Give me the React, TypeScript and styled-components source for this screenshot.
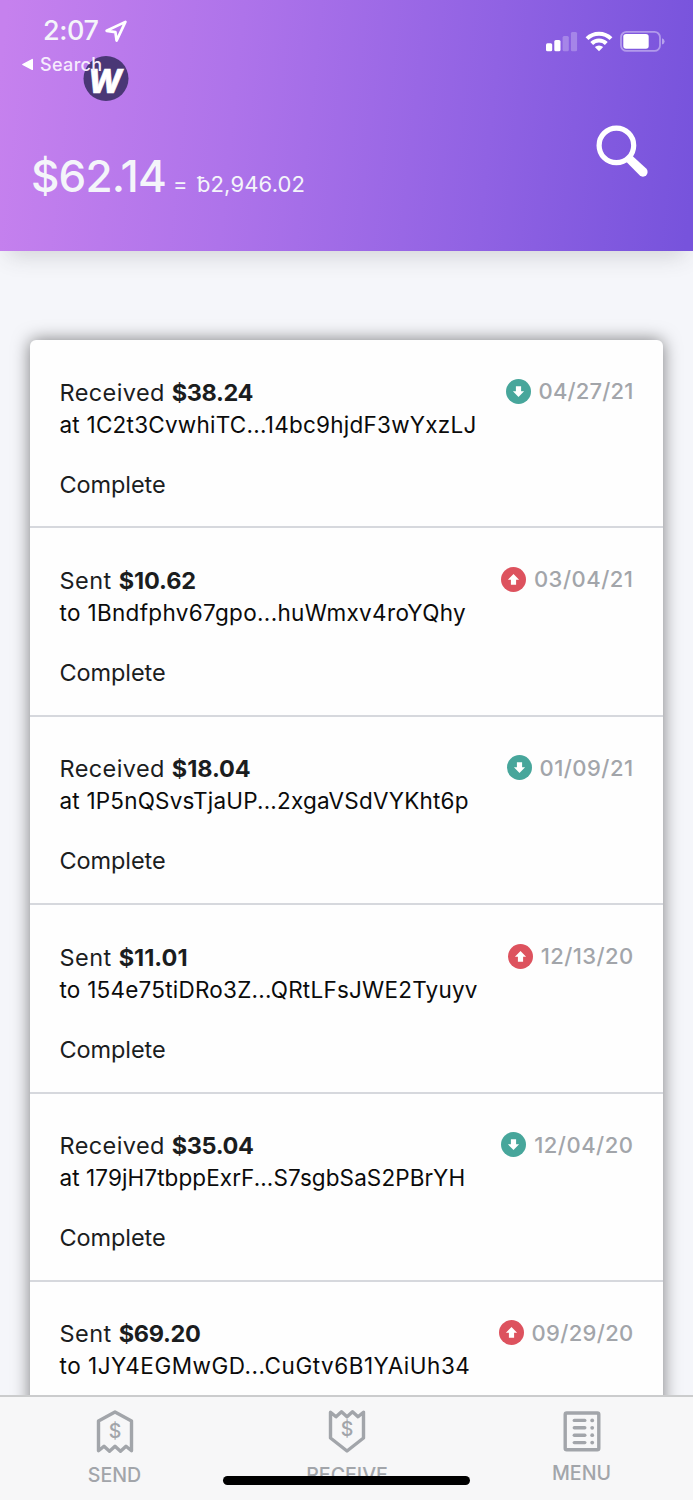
import React from 'react';
import styled, { createGlobalStyle } from 'styled-components';

const GlobalStyle = createGlobalStyle`
  * { box-sizing: border-box; }
  body { margin: 0; background: #f5f6fa; font-family: Inter, "Liberation Sans", sans-serif; }
`;

const Screen = styled.div`
  display: flex;
  flex-direction: column;
  width: 693px;
  height: 1500px;
  overflow: hidden;
  background: #f5f6fa;
`;

const Header = styled.header`
  position: relative;
  z-index: 1;
  flex: none;
  display: flex;
  flex-direction: column;
  height: 251px;
  background: linear-gradient(96deg, #c681ee 1%, #ae73ea 34%, #9062e3 70%, #7753dc 99%);
  box-shadow: 0 12px 22px -8px rgba(60, 62, 66, 0.2);
  color: #f4f5fa;
`;

const StatusBar = styled.div`
  display: flex;
  justify-content: space-between;
  align-items: flex-start;
  height: 50px;
  padding: 14px 27px 0 43px;
`;

const Clock = styled.div`
  display: flex;
  align-items: center;
  gap: 6px;
  height: 34px;
  font-size: 27px;
  font-weight: 550;
  line-height: 34px;
  letter-spacing: -0.4px;
`;

const StatusIcons = styled.div`
  display: flex;
  gap: 7px;
  padding-top: 16px;
`;

const BackLink = styled.div`
  position: relative;
  z-index: 1;
  display: flex;
  align-items: center;
  gap: 6px;
  height: 28px;
  padding-left: 21px;
  font-size: 18px;
  font-weight: 500;
  letter-spacing: 0.35px;
  color: #f6ecfd;
`;

const Logo = styled.svg`
  position: absolute;
  left: 83px;
  top: 55px;
`;

const BalanceRow = styled.div`
  display: flex;
  justify-content: space-between;
  align-items: flex-start;
  padding: 46px 44px 0 31px;
`;

const Balance = styled.div`
  display: flex;
  align-items: baseline;
  padding-top: 25px;
  line-height: 54px;
  white-space: pre;
`;

const Fiat = styled.span`
  font-size: 44px;
  font-weight: 450;
  letter-spacing: -0.8px;
`;

const Bits = styled.span`
  margin-left: 7px;
  padding-bottom: 1px;
  font-size: 22px;
  letter-spacing: 0.15px;
  word-spacing: 2.8px;
`;

const List = styled.main`
  flex: 1;
  min-height: 0;
  overflow: hidden;
  padding: 89px 30px 0;
`;

const Card = styled.section`
  height: 1200px;
  border-radius: 6px;
  background: #fefefe;
  box-shadow: 0 0 17px rgba(0, 0, 0, 0.5);
`;

const Row = styled.article`
  display: flex;
  justify-content: space-between;
  align-items: flex-start;
  height: 188.4px;
  padding: 36.5px 29.5px 0 29.5px;
  border-bottom: 2px solid #d6d8dd;
  line-height: 32px;
  color: #1b1d1e;
`;

const Details = styled.div`
  display: flex;
  flex-direction: column;
`;

const Title = styled.div<{ $spacing: number }>`
  font-size: 23.5px;
  letter-spacing: ${p => p.$spacing}px;
  white-space: pre;
`;

const Amount = styled.strong<{ $spacing: number }>`
  font-weight: 700;
  letter-spacing: ${p => p.$spacing}px;
`;

const Address = styled.div<{ $spacing: number }>`
  font-size: 22.5px;
  letter-spacing: ${p => p.$spacing}px;
  color: #0b0b0b;
  white-space: nowrap;
`;

const State = styled.div`
  margin-top: 28px;
  font-size: 23.5px;
  letter-spacing: -0.1px;
`;

const When = styled.time<{ $spacing: number }>`
  display: flex;
  align-items: center;
  gap: 8px;
  height: 29px;
  font-size: 22px;
  font-weight: 500;
  letter-spacing: ${p => p.$spacing}px;
  color: #a2a5aa;
`;

const TabBar = styled.nav`
  position: relative;
  flex: none;
  display: grid;
  grid-template-columns: 229px 236px 233px;
  height: 105px;
  border-top: 2px solid #cbcccd;
  background: #f7f7f8;
`;

const Tab = styled.div<{ $lift?: boolean }>`
  display: flex;
  flex-direction: column;
  align-items: center;
  gap: ${p => (p.$lift ? 8 : 10)}px;
  padding-top: 12px;
  font-size: 19.6px;
  font-weight: 500;
  line-height: 24px;
  color: #a2a5aa;
`;

const HomeIndicator = styled.div`
  position: absolute;
  left: 223px;
  top: 79px;
  width: 247px;
  height: 9px;
  border-radius: 5px;
  background: #000;
`;

const Direction = ({ received }: { received: boolean }) => (
  <svg width="25" height="25" viewBox="-12.5 -12.5 25 25">
    <circle r="12.5" fill={received ? '#47a69b' : '#dd525e'} />
    <path
      d="M-2.6-5.3H2.6V-.2H5.6L0 5.6-5.6-.2H-2.6Z"
      fill="#fff"
      transform={received ? undefined : 'rotate(180)'}
    />
  </svg>
);

const iconStroke = {
  fill: 'none',
  stroke: '#a2a5aa',
  strokeWidth: 3.4,
  strokeLinejoin: 'round' as const,
  strokeLinecap: 'round' as const,
};

const SendIcon = () => (
  <svg width="38" height="44" viewBox="0 0 38 44">
    <path d="M19 3 35.5 12V41.7L30 37.2 24.5 42.2 19 37.2 13.5 42.2 8 37.2 2.5 41.7V12Z" {...iconStroke} />
    <text x="19" y="29.3" textAnchor="middle" fontSize="19.5" fontWeight="550" fill="#a2a5aa">$</text>
  </svg>
);

const ReceiveIcon = () => (
  <svg width="38" height="44" viewBox="0 0 38 44">
    <path d="M2.5 3.2 8 7.7 13.5 2.7 19 7.7 24.5 2.7 30 7.7 35.5 3.2V29L19 42 2.5 29Z" {...iconStroke} />
    <text x="19" y="27" textAnchor="middle" fontSize="19.5" fontWeight="550" fill="#a2a5aa">$</text>
  </svg>
);

const MenuIcon = () => (
  <svg width="38" height="44" viewBox="0 0 38 44">
    <rect x="2.2" y="4" width="33.6" height="36.8" rx="1.5" {...iconStroke} />
    {[11.4, 18.8, 26.2, 33.6].map(y => (
      <g key={y}>
        <path d={`M11.3 ${y}H21.8`} {...iconStroke} />
        <circle cx="29.2" cy={y} r="1.9" fill="#a2a5aa" />
      </g>
    ))}
  </svg>
);

type Tx = {
  received: boolean;
  amount: string;
  amountSpacing: number;
  address: string;
  addressSpacing: number;
  date: string;
  dateSpacing: number;
};

const transactions: Tx[] = [
  { received: true, amount: '$38.24', amountSpacing: -0.4, address: 'at 1C2t3CvwhiTC...14bc9hjdF3wYxzLJ', addressSpacing: 0.24, date: '04/27/21', dateSpacing: 0.15 },
  { received: false, amount: '$10.62', amountSpacing: -0.1, address: 'to 1Bndfphv67gpo...huWmxv4roYQhy', addressSpacing: 0.33, date: '03/04/21', dateSpacing: 0.5 },
  { received: true, amount: '$18.04', amountSpacing: -0.1, address: 'at 1P5nQSvsTjaUP...2xgaVSdVYKht6p', addressSpacing: 0.2, date: '01/09/21', dateSpacing: 0.45 },
  { received: false, amount: '$11.01', amountSpacing: 0, address: 'to 154e75tiDRo3Z...QRtLFsJWE2Tyuyv', addressSpacing: 0.23, date: '12/13/20', dateSpacing: 0.4 },
  { received: true, amount: '$35.04', amountSpacing: -0.4, address: 'at 179jH7tbppExrF...S7sgbSaS2PBrYH', addressSpacing: 0.09, date: '12/04/20', dateSpacing: 0.5 },
  { received: false, amount: '$69.20', amountSpacing: -0.3, address: 'to 1JY4EGMwGD...CuGtv6B1YAiUh34', addressSpacing: 0.52, date: '09/29/20', dateSpacing: 0.3 },
];

export default function App() {
  return (
    <Screen>
      <GlobalStyle />
      <Header>
        <StatusBar>
          <Clock>
            2:07
            <svg width="22" height="23" viewBox="0 0 22 23">
              <path d="M20.4 1.9 11.6 20.6 10.4 12.2 1.6 10.8Z" fill="none" stroke="#fff" strokeWidth="2.7" strokeLinejoin="round" />
            </svg>
          </Clock>
          <StatusIcons>
            <svg width="33" height="22" viewBox="0 0 33 22" fill="#fff">
              <rect x="1" y="13.3" width="6.2" height="8" rx="1.5" />
              <rect x="9.3" y="10" width="6.2" height="11.3" rx="1.5" />
              <rect x="17.6" y="6" width="6.2" height="15.3" rx="1.5" opacity=".25" />
              <rect x="25.9" y="2" width="6.2" height="19.3" rx="1.5" opacity=".25" />
            </svg>
            <svg width="28" height="22" viewBox="0 0 28 22">
              <g fill="none" stroke="#fff" strokeWidth="4">
                <path d="M2 8.7A17 17 0 0 1 26 8.7" />
                <path d="M6.7 13.5A10.3 10.3 0 0 1 21.3 13.5" />
              </g>
              <path d="M14 21.3 9.8 17.1A6 6 0 0 1 18.2 17.1Z" fill="#fff" />
            </svg>
            <svg width="46" height="22" viewBox="0 0 46 22">
              <rect x="1" y="1.9" width="39" height="19" rx="5.5" fill="none" stroke="#fff" strokeWidth="1.8" opacity=".4" />
              <rect x="3.3" y="4" width="25.4" height="14.8" rx="2.8" fill="#fff" />
              <path d="M42 8.2Q44.6 9 44.6 11.4T42 14.6Z" fill="#fff" opacity=".45" />
            </svg>
          </StatusIcons>
        </StatusBar>
        <BackLink>
          <svg width="13" height="13" viewBox="0 0 13 13">
            <path d="M1.8 6.5 11.3 1.6V11.4Z" fill="#fff" stroke="#fff" strokeWidth="1.4" strokeLinejoin="round" />
          </svg>
          Search
        </BackLink>
        <Logo width="46" height="46" viewBox="0 0 46 46">
          <circle cx="23" cy="23.5" r="22.5" fill="#4a3776" />
          <text x="5" y="37.6" fontFamily="Inter, sans-serif" fontWeight="800" fontStyle="italic" fontSize="33" textLength="34" lengthAdjust="spacingAndGlyphs" fill="#fff" stroke="#fff" strokeWidth=".6">W</text>
        </Logo>
        <BalanceRow>
          <Balance>
            <Fiat>$62.14</Fiat>
            <Bits>= ƀ2,946.02</Bits>
          </Balance>
          <svg width="54" height="54" viewBox="0 0 54 54" fill="#fff">
            <circle cx="21.4" cy="21.4" r="17.3" fill="none" stroke="#fff" strokeWidth="5.2" />
            <path d="M31.5 38 37.5 32 51.2 44.6A4.6 4.6 0 0 1 44.6 51.3Z" />
          </svg>
        </BalanceRow>
      </Header>
      <List>
        <Card>
          {transactions.map(tx => (
            <Row key={tx.date}>
              <Details>
                <Title $spacing={tx.received ? 0.4 : 0.45}>
                  {tx.received ? 'Received ' : 'Sent '}
                  <Amount $spacing={tx.amountSpacing}>{tx.amount}</Amount>
                </Title>
                <Address $spacing={tx.addressSpacing}>{tx.address}</Address>
                <State>Complete</State>
              </Details>
              <When $spacing={tx.dateSpacing}>
                <Direction received={tx.received} />
                {tx.date}
              </When>
            </Row>
          ))}
        </Card>
      </List>
      <TabBar>
        <Tab><SendIcon />SEND</Tab>
        <Tab><ReceiveIcon />RECEIVE</Tab>
        <Tab $lift><MenuIcon />MENU</Tab>
        <HomeIndicator />
      </TabBar>
    </Screen>
  );
}
